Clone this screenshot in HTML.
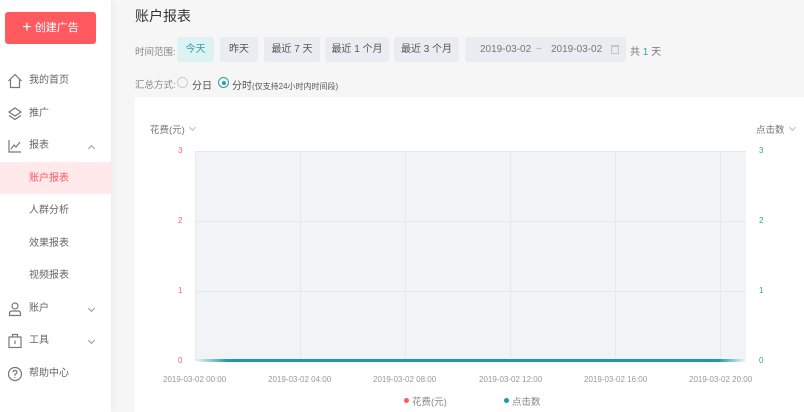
<!DOCTYPE html>
<html><head><meta charset="utf-8"><style>
*{margin:0;padding:0;box-sizing:border-box}
body{width:804px;height:412px;overflow:hidden;background:#f6f6f7;font-family:"Liberation Sans","Noto Sans CJK SC",sans-serif;position:relative;color:#555}
.side{position:absolute;left:0;top:0;width:111px;height:412px;background:#fff;box-shadow:2px 0 6px rgba(0,0,0,.04)}
.btn{position:absolute;left:5px;top:12px;width:91px;height:32px;background:#fe5a5f;border-radius:3px;color:#fff;font-size:11px;line-height:32px;text-align:center}
.it{position:absolute;left:0;width:111px;height:32px;line-height:34px;font-size:10px;color:#666}
.it span{position:absolute;left:29px}
.it svg{position:absolute;left:7px;top:9px}
.ch{position:absolute;left:89px;top:14px;width:5px;height:5px;border-right:1px solid #999;border-bottom:1px solid #999;transform:rotate(45deg)}
.up{transform:rotate(-135deg);top:17px}
.t{position:absolute;font-size:10px;white-space:nowrap}
.b{position:absolute;top:37px;height:25px;background:#e9edf1;border-radius:3px;font-size:10px;line-height:25px;text-align:center;color:#555}
.card{position:absolute;left:135px;top:97px;width:669px;height:315px;background:#fff}
.ax{position:absolute;font-size:8px;color:#999;white-space:nowrap}
.sch{display:inline-block;width:5px;height:5px;border-right:1px solid #bbb;border-bottom:1px solid #bbb;transform:rotate(45deg);margin-left:5px;vertical-align:3px}
</style></head><body>
<div class="side">
<div class="btn"><span style="font-size:16px;vertical-align:-1px">+</span> 创建广告</div>
<div class="it" style="top:64px"><svg width="16" height="16" viewBox="0 0 16 16" fill="none" stroke="#777" stroke-width="1.2"><path d="M1.5 8L8 1.5 14.5 8M3.5 6.5V14.5H12.5V6.5"/></svg><span>我的首页</span></div>
<div class="it" style="top:97px"><svg width="16" height="16" viewBox="0 0 16 16" fill="none" stroke="#777" stroke-width="1.2"><path d="M8 2L14 6 8 10 2 6Z M2 9.5L8 13.5 14 9.5"/></svg><span>推广</span></div>
<div class="it" style="top:129px"><svg width="16" height="16" viewBox="0 0 16 16" fill="none" stroke="#777" stroke-width="1.2"><path d="M2 2V14H14M4 11L7 7 9 9 13 4"/></svg><span>报表</span><div class="ch up"></div></div>
<div class="it" style="top:162px;background:#ffe9ea;color:#fe5a5f"><span>账户报表</span></div>
<div class="it" style="top:194px"><span>人群分析</span></div>
<div class="it" style="top:227px"><span>效果报表</span></div>
<div class="it" style="top:259px"><span>视频报表</span></div>
<div class="it" style="top:292px"><svg width="16" height="16" viewBox="0 0 16 16" fill="none" stroke="#777" stroke-width="1.2"><circle cx="8" cy="5" r="3"/><path d="M2.5 14.5V12.5Q2.5 10 5 10H11Q13.5 10 13.5 12.5V14.5Z"/></svg><span>账户</span><div class="ch"></div></div>
<div class="it" style="top:324px"><svg width="16" height="16" viewBox="0 0 16 16" fill="none" stroke="#777" stroke-width="1.2"><rect x="2" y="4" width="12" height="10.5"/><path d="M5.5 4V1.5H10.5V4M8 7.5V11"/></svg><span>工具</span><div class="ch"></div></div>
<div class="it" style="top:357px"><svg width="16" height="16" viewBox="0 0 16 16" fill="none" stroke="#777" stroke-width="1.2"><circle cx="8" cy="8" r="6.5"/><path d="M6 6.3Q6 4.5 8 4.5 10 4.5 10 6.2 10 7.5 8 8.3V9.8M8 11.3V12"/></svg><span>帮助中心</span></div>
</div>
<div class="t" style="left:135px;top:6px;font-size:14px;color:#333">账户报表</div>
<div class="t" style="left:135px;top:44px;color:#888;font-size:9.5px">时间范围:</div>
<div class="b" style="left:177px;width:37px;background:#dcf2f3;color:#2aa0a8">今天</div>
<div class="b" style="left:220px;width:38px">昨天</div>
<div class="b" style="left:264px;width:56px">最近 7 天</div>
<div class="b" style="left:325px;width:64px">最近 1 个月</div>
<div class="b" style="left:394px;width:65px">最近 3 个月</div>
<div class="b" style="left:465px;width:161px;text-align:left;color:#777"><span style="position:absolute;left:15px">2019-03-02</span><span style="position:absolute;left:71px;color:#aaa">~</span><span style="position:absolute;left:86px">2019-03-02</span><span style="position:absolute;left:146px;top:8px;width:8px;height:9px;border:1px solid #c5c5c5;border-top-width:2px"></span></div>
<div class="t" style="left:630px;top:43px;color:#777">共 <span style="color:#2aa0a8">1</span> 天</div>
<div class="t" style="left:135px;top:77px;color:#888;font-size:9.5px">汇总方式:</div>
<div style="position:absolute;left:177px;top:77px;width:11px;height:11px;border:1px solid #ccc;border-radius:50%"></div>
<div class="t" style="left:192px;top:77px;color:#555">分日</div>
<div style="position:absolute;left:218px;top:77px;width:11px;height:11px;border:1px solid #2aa0a8;border-radius:50%"><div style="margin:2.5px;width:4px;height:4px;background:#2aa0a8;border-radius:50%"></div></div>
<div class="t" style="left:232px;top:77px;color:#555">分时<span style="font-size:8px">(仅支持24小时内时间段)</span></div>
<div class="card"></div>
<div class="t" style="left:150px;top:122px;color:#777;font-size:9.5px">花费(元)<span class="sch"></span></div>
<div class="t" style="left:756px;top:122px;color:#777;font-size:9.5px">点击数<span class="sch"></span></div>
<svg style="position:absolute;left:0;top:0" width="804" height="412">
<rect x="195" y="151" width="551" height="210" fill="#f1f4f7"/>
<g stroke="#e5e9ed" stroke-width="1">
<path d="M195 151.5H746M195 221.5H746M195 291.5H746M195.5 151V361M300.5 151V361M405.5 151V361M510.5 151V361M615.5 151V361M720.5 151V361"/></g>
<defs><linearGradient id="g" x1="0" x2="1"><stop offset="0" stop-color="#1e98a4" stop-opacity="0"/><stop offset=".06" stop-color="#1e98a4"/><stop offset=".95" stop-color="#1e98a4"/><stop offset="1" stop-color="#1e98a4" stop-opacity="0"/></linearGradient></defs>
<rect x="195" y="359" width="551" height="3" fill="url(#g)"/>
</svg>
<div class="ax" style="left:178px;top:146px;color:#f66">3</div>
<div class="ax" style="left:178px;top:216px;color:#f66">2</div>
<div class="ax" style="left:178px;top:286px;color:#f66">1</div>
<div class="ax" style="left:178px;top:356px;color:#f66">0</div>
<div class="ax" style="left:759px;top:146px;color:#2aa0a8">3</div>
<div class="ax" style="left:759px;top:216px;color:#2aa0a8">2</div>
<div class="ax" style="left:759px;top:286px;color:#2aa0a8">1</div>
<div class="ax" style="left:759px;top:356px;color:#2aa0a8">0</div>
<div class="ax" style="left:163px;top:375px">2019-03-02 00:00</div>
<div class="ax" style="left:268px;top:375px">2019-03-02 04:00</div>
<div class="ax" style="left:373px;top:375px">2019-03-02 08:00</div>
<div class="ax" style="left:479px;top:375px">2019-03-02 12:00</div>
<div class="ax" style="left:584px;top:375px">2019-03-02 16:00</div>
<div class="ax" style="left:689px;top:375px">2019-03-02 20:00</div>
<div style="position:absolute;left:404px;top:398px;width:5px;height:5px;border-radius:50%;background:#fe5a5f"></div>
<div class="t" style="left:412px;top:394px;font-size:9.5px;color:#888">花费(元)</div>
<div style="position:absolute;left:504px;top:398px;width:5px;height:5px;border-radius:50%;background:#1e98a4"></div>
<div class="t" style="left:512px;top:394px;font-size:9.5px;color:#888">点击数</div>
</body></html>
